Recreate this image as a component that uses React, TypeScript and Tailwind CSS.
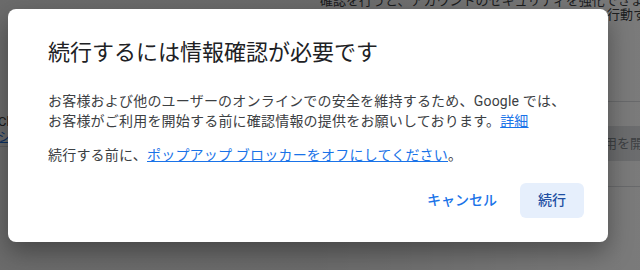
import React from "react";

const font = { fontFamily: 'Roboto, "Noto Sans CJK JP", sans-serif' };

// the page that sits behind the dimmed overlay
const BackgroundPage = () => (
  <div className="h-[270px] w-[640px] overflow-hidden bg-white text-[#202124]">
    <div className="flex flex-col items-end text-[13px] leading-[13px] text-[#3c4043]">
      <p className="-mt-[6px] w-[320px] whitespace-nowrap">
        確認を行うと、アカウントのセキュリティを強化できます。不審な操作が
      </p>
      <p className="w-[33px] whitespace-nowrap pt-[1px]">行動す</p>
    </div>
    <div className="mt-[80px] flex justify-between">
      <div className="flex w-[24px] flex-col pt-[13px] text-[13px] leading-[15px] text-[#3c4043]">
        <span className="-ml-[2px] whitespace-nowrap">Ch</span>
        <span className="-ml-[2px] whitespace-nowrap text-[#1a73e8] underline">シリ</span>
        <div className="mt-[2px] h-px w-full bg-[#dadce0]" />
      </div>
      <div className="flex w-[40px] flex-col">
        <div className="h-px bg-[#dadce0]" />
        <div className="mt-[24px] flex h-[35px] items-center overflow-hidden whitespace-nowrap bg-[#e0e2e5] pl-[4px] text-[13px] text-[#80868b]">
          用を開
        </div>
        <div className="mt-[25px] h-px bg-[#dadce0]" />
      </div>
    </div>
  </div>
);

export default function App() {
  return (
    <div className="relative h-[270px] w-[640px] overflow-hidden" style={font}>
      <BackgroundPage />

      {/* dim layer + dialog */}
      <div className="absolute inset-0 bg-gradient-to-r from-black/[0.58] via-black/[0.58] to-black/[0.52] pl-[8px] pt-[9px]">
        <div className="flex h-[233px] w-[600px] flex-col rounded-[8px] bg-white pb-[24px] pl-[40px] pr-[24px] pt-[30px] shadow-[0_10px_24px_rgba(0,0,0,0.35)]">
          <h1 className="text-[22px] leading-[28px] text-[#202124]">
            続行するには情報確認が必要です
          </h1>

          <p className="mt-[24px] text-[14px] leading-[20px] tracking-[0.2px] text-[#3c4043]">
            お客様および他のユーザーのオンラインでの安全を維持するため、Google では、
            <br />
            お客様がご利用を開始する前に確認情報の提供をお願いしております。
            <a className="text-[#1a73e8] underline">詳細</a>
          </p>

          <p className="mt-[14px] text-[14px] leading-[20px] tracking-[0.2px] text-[#3c4043]">
            続行する前に、
            <a className="text-[#1a73e8] underline">ポップアップ ブロッカーをオフにしてください</a>
            。
          </p>

          <div className="mt-[18px] flex justify-end gap-[7px]">
            <button className="h-[35px] rounded-[6px] px-[16px] text-[14px] font-medium text-[#1a73e8]">
              キャンセル
            </button>
            <button className="h-[35px] w-[64px] rounded-[6px] bg-[#e6effc] text-[14px] font-medium text-[#1f4fa3]">
              続行
            </button>
          </div>
        </div>
      </div>
    </div>
  );
}
